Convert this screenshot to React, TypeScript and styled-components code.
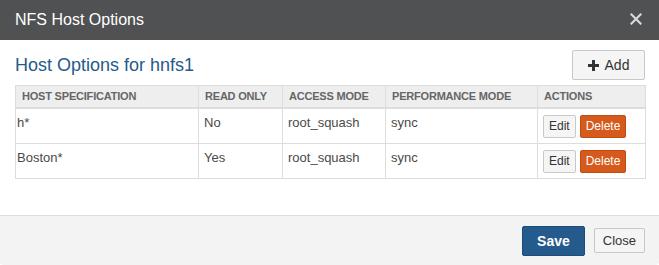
import React from "react";
import styled, {createGlobalStyle} from "styled-components";

const GlobalStyle = createGlobalStyle`
  html, body {
    margin: 0;
    padding: 0;
    background: #ffffff;
  }
  body {
    font-family: "Liberation Sans", Arial, sans-serif;
  }
`

const Modal = styled.div`
  width: 659px;
  height: 265px;
  display: flex;
  flex-direction: column;
  background-color: #ffffff;
  border-radius: 0 0 4px 4px;
  overflow: hidden;
`

const ModalHeader = styled.div`
  height: 40px;
  flex-shrink: 0;
  display: flex;
  align-items: center;
  justify-content: space-between;
  padding: 0 15px 0 15px;
  background-color: #505152;
  color: #ffffff;
  font-size: 16px;
`

const CloseIcon = styled.button`
  border: none;
  background: none;
  padding: 0;
  width: 14px;
  height: 14px;
  display: flex;
  cursor: pointer;
`

const ModalBody = styled.div`
  flex: 1;
  padding: 10px 14px 0 15px;
`

const TitleRow = styled.div`
  height: 30px;
  display: flex;
  align-items: center;
  justify-content: space-between;
  margin-bottom: 5px;
`

const Title = styled.h2`
  margin: 0;
  font-size: 18px;
  font-weight: normal;
  color: #255a8a;
`

const Button = styled.button<{$variant?: "default" | "primary" | "danger"; $size?: "sm" | "md" | "lg"}>`
  font-family: "Liberation Sans", Arial, sans-serif;
  border-radius: 2px;
  cursor: pointer;
  display: inline-flex;
  align-items: center;
  justify-content: center;
  gap: 6px;
  box-sizing: border-box;
  border: 1px solid ${({$variant}) => $variant === "primary" ? "#1d4c78" : $variant === "danger" ? "#bf4e14" : "#c8c8c8"};
  background-color: ${({$variant}) => $variant === "primary" ? "#245a8c" : $variant === "danger" ? "#d65a1c" : "#f5f5f5"};
  color: ${({$variant}) => $variant ? "#ffffff" : "#333333"};
  font-weight: ${({$variant}) => $variant === "primary" ? "bold" : "normal"};
  font-size: ${({$size}) => $size === "sm" ? "12px" : $size === "lg" ? "14px" : "13px"};
  height: ${({$size}) => $size === "sm" ? "23px" : $size === "lg" ? "30px" : "25px"};
  padding: 0 ${({$size}) => $size === "sm" ? "5px" : $size === "lg" ? "14px" : "8px"};
`

const AddButton = styled(Button)`
  width: 73px;
  height: 30px;
  font-size: 14px;
  color: #333333;
  padding: 0;
`

const Table = styled.table`
  width: 630px;
  border-collapse: collapse;
  table-layout: fixed;
  font-size: 13px;
  color: #4a4a4a;
`

const HeadCell = styled.th<{$width: number}>`
  width: ${({$width}) => $width}px;
  box-sizing: border-box;
  height: 22px;
  padding: 0 6px;
  text-align: left;
  font-size: 11px;
  font-weight: bold;
  color: #666666;
  letter-spacing: -0.2px;
  background-color: #eeeeee;
  border: 1px solid #dddddd;
  border-bottom: 2px solid #dddddd;
`

const Row = styled.tr`
  height: 35px;
`

const Cell = styled.td<{$first?: boolean}>`
  box-sizing: border-box;
  padding: 5px ${({$first}) => $first ? "1px" : "5px"};
  vertical-align: top;
  line-height: 18px;
  border: 1px solid #dddddd;
`

const ActionGroup = styled.div`
  display: flex;
  gap: 4px;
  padding-top: 1px;
`

const ModalFooter = styled.div`
  height: 49px;
  flex-shrink: 0;
  display: flex;
  align-items: center;
  justify-content: flex-end;
  gap: 9px;
  padding: 0 14px;
  background-color: #f3f3f3;
  border-top: 1px solid #dddddd;
`

const columns = [
    {label: "Host Specification", width: 183},
    {label: "Read Only", width: 84},
    {label: "Access Mode", width: 103},
    {label: "Performance Mode", width: 152},
    {label: "Actions", width: 108},
]

const hosts = [
    {id: 1, spec: "h*", readOnly: "No", access: "root_squash", performance: "sync"},
    {id: 2, spec: "Boston*", readOnly: "Yes", access: "root_squash", performance: "sync"},
]

const App = () => {
    return (
        <>
            <GlobalStyle />
            <Modal>
                <ModalHeader>
                    <span>NFS Host Options</span>
                    <CloseIcon aria-label="Close">
                        <svg width="12" height="12" viewBox="0 0 12 12">
                            <path d="M1.5 1.5 L10.5 10.5 M10.5 1.5 L1.5 10.5" stroke="#d8d8d8" strokeWidth="2.2" strokeLinecap="square" />
                        </svg>
                    </CloseIcon>
                </ModalHeader>
                <ModalBody>
                    <TitleRow>
                        <Title>Host Options for hnfs1</Title>
                        <AddButton>
                            <svg width="11" height="11" viewBox="0 0 11 11">
                                <path d="M4 0 H7 V4 H11 V7 H7 V11 H4 V7 H0 V4 H4 Z" fill="#333333" />
                            </svg>
                            Add
                        </AddButton>
                    </TitleRow>
                    <Table>
                        <thead>
                            <tr>
                                {columns.map((col) => (
                                    <HeadCell key={col.label} $width={col.width}>{col.label.toUpperCase()}</HeadCell>
                                ))}
                            </tr>
                        </thead>
                        <tbody>
                            {hosts.map((host) => (
                                <Row key={host.id}>
                                    <Cell $first>{host.spec}</Cell>
                                    <Cell>{host.readOnly}</Cell>
                                    <Cell>{host.access}</Cell>
                                    <Cell>{host.performance}</Cell>
                                    <Cell>
                                        <ActionGroup>
                                            <Button $size="sm">Edit</Button>
                                            <Button $size="sm" $variant="danger">Delete</Button>
                                        </ActionGroup>
                                    </Cell>
                                </Row>
                            ))}
                        </tbody>
                    </Table>
                </ModalBody>
                <ModalFooter>
                    <Button $size="lg" $variant="primary">Save</Button>
                    <Button $size="md">Close</Button>
                </ModalFooter>
            </Modal>
        </>
    )
}

export default App;
